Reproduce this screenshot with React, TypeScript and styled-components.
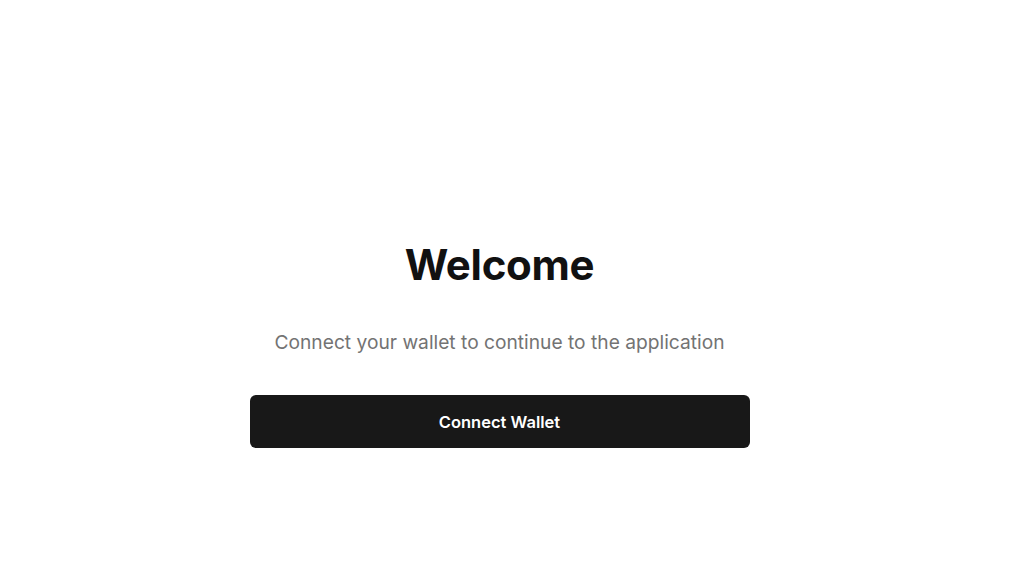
import React from "react";
import styled, { createGlobalStyle } from "styled-components";

const GlobalStyle = createGlobalStyle`
    html, body {
        margin: 0;
        padding: 0;
        background: #ffffff;
        font-family: Inter, "Noto Sans", "Liberation Sans", sans-serif;
    }
`;

const Page = styled.main`
    min-height: 100vh;
    box-sizing: border-box;
    padding: 241px 25px 0 0;
    display: flex;
    flex-direction: column;
    align-items: center;
`;

const Title = styled.h1`
    margin: 0;
    font-size: 42px;
    line-height: 48px;
    font-weight: 700;
    letter-spacing: -0.3px;
    color: #111111;
`;

const Subtitle = styled.p`
    margin: 39px 0 0 0;
    font-size: 19.2px;
    line-height: 28px;
    color: #737373;
`;

const ConnectButton = styled.button`
    margin-top: 39px;
    width: 500px;
    height: 53px;
    border: none;
    border-radius: 6px;
    background-color: #181818;
    color: #ffffff;
    font-family: inherit;
    font-size: 16.5px;
    font-weight: 600;
    cursor: pointer;
`;

const App: React.FC = () => {
    return (
        <>
            <GlobalStyle />
            <Page>
                <Title>Welcome</Title>
                <Subtitle>Connect your wallet to continue to the application</Subtitle>
                <ConnectButton>Connect Wallet</ConnectButton>
            </Page>
        </>
    );
};

export default App;
